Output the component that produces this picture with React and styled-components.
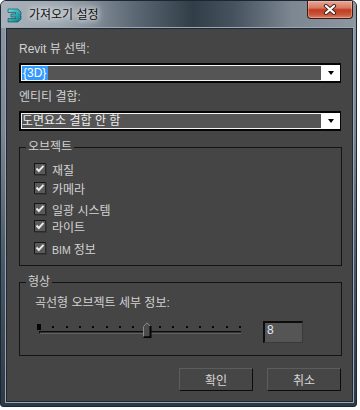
import React from 'react'
import styled, { createGlobalStyle } from 'styled-components'

const GlobalStyle = createGlobalStyle`
  html, body {
    margin: 0;
    padding: 0;
    background: #ffffff;
  }
  body {
    font-family: "Liberation Sans", "Noto Sans CJK KR", sans-serif;
    font-size: 12px;
  }
`

const Window = styled.div`
  width: 357px;
  height: 407px;
  box-sizing: border-box;
  border: 1px solid #1c2733;
  border-radius: 6px 6px 3px 3px;
  background: linear-gradient(180deg, #8e99a4 0px, #7a8793 130px, #4a5967 260px, #2c3a48 100%);
  display: flex;
  flex-direction: column;
  overflow: hidden;
`

const TitleBar = styled.div`
  height: 27px;
  flex: none;
  display: flex;
  align-items: flex-start;
  padding: 0 3px 0 6px;
  background: linear-gradient(90deg, #a9b2ba 0%, #9aa4ad 18%, #5b6772 38%, #313d47 54%, #47535e 66%, #7c8792 82%, #8d97a0 100%);
`

const AppIcon = styled.svg`
  width: 15px;
  height: 15px;
  margin-top: 7px;
  flex: none;
`

const Title = styled.span`
  margin: 7px 0 0 7px;
  line-height: 14px;
  font-size: 12px;
  color: #111;
  text-shadow: 0 0 5px rgba(255, 255, 255, 0.95), 0 0 9px rgba(255, 255, 255, 0.8), 0 0 14px rgba(255, 255, 255, 0.6);
`

const CloseButton = styled.div`
  margin-left: auto;
  width: 46px;
  height: 18px;
  box-sizing: border-box;
  border: 1px solid #3e1a12;
  border-top: none;
  border-radius: 0 0 4px 4px;
  background: linear-gradient(180deg, #e9a796 0%, #d77a63 40%, #bf3d22 52%, #c9553a 80%, #d9826a 100%);
  box-shadow: inset 0 0 0 1px rgba(255, 220, 200, 0.35);
  display: flex;
  align-items: center;
  justify-content: center;
`

const Client = styled.div`
  flex: 1;
  margin: 0 3px 4px 5px;
  border: 1px solid #1d2936;
  box-shadow: 0 0 0 1px #9ba7b2;
  background: #454545;
  padding: 13px 10px 0 12px;
  display: flex;
  flex-direction: column;
  color: #d2d2d2;
`

const Label = styled.div`
  line-height: 14px;
  height: 14px;
  margin-top: ${p => p.$space || 0}px;
  margin-left: ${p => p.$indent || 0}px;
  white-space: nowrap;
`

const Select = styled.div`
  margin-top: 7px;
  margin-right: 1px;
  height: 20px;
  box-sizing: border-box;
  border: 2px solid #050505;
  border-right-width: 1px;
  display: flex;
`

const Field = styled.div`
  flex: 1;
  border: 1px solid #f4f4f4;
  border-right: none;
  background: #555555;
  line-height: 14px;
  color: #ececec;
  display: flex;
  white-space: nowrap;
`

const Highlight = styled.span`
  background: #3399ff;
  color: #ffffff;
  padding: 0 2px 0 1px;
`

const ArrowBox = styled.div`
  width: 18px;
  background: #ffffff;
  display: flex;
  align-items: center;
  justify-content: center;
  padding-left: 1px;
  &::after {
    content: '';
    border-left: 3.5px solid transparent;
    border-right: 3.5px solid transparent;
    border-top: 4px solid #000;
  }
`

const Group = styled.fieldset`
  margin: ${p => p.$space}px 0 0 0;
  padding: ${p => p.$pt}px 0 ${p => p.$pb}px 14px;
  border: 1px solid #141414;
  min-width: 0;
`

const Legend = styled.legend`
  padding: 0 2px;
  margin-left: -8px;
  line-height: 14px;
  color: #d2d2d2;
`

const CheckRow = styled.div`
  display: flex;
  align-items: center;
  gap: 6px;
  height: 14px;
  margin-top: ${p => p.$space}px;
  white-space: nowrap;
`

const Box = styled.span`
  width: 12px;
  height: 12px;
  box-sizing: border-box;
  border: 1px solid;
  border-color: #151515 #2a2a2a #2a2a2a #151515;
  background: #5a5a5a;
  box-shadow: 1px 1px 0 #383838;
  display: flex;
  align-items: center;
  justify-content: center;
  flex: none;
`

const Small = styled.span`
  font-size: 10.5px;
  margin-right: 3px;
`

const SliderRow = styled.div`
  margin-top: 11px;
  margin-left: 3px;
  height: 22px;
  display: flex;
  align-items: flex-start;
`

const Slider = styled.div`
  position: relative;
  width: 204px;
  height: 22px;
`

const Ticks = styled.div`
  margin-top: 3px;
  height: 6px;
  display: flex;
  align-items: center;
  justify-content: space-between;
`

const Tick = styled.span`
  width: ${p => (p.$first ? 4 : 2)}px;
  height: ${p => (p.$first ? 6 : 2)}px;
  background: #050505;
`

const Track = styled.div`
  margin: 1px 0 0 2px;
  height: 1px;
  border-top: 1px solid #0c0c0c;
  border-left: 1px solid #0c0c0c;
  border-bottom: 1px solid #626262;
  background: #333;
`

const Thumb = styled.svg`
  position: absolute;
  top: 1px;
  width: 9px;
  height: 16px;
`

const NumberBox = styled.div`
  margin-left: 22px;
  width: 40px;
  height: 22px;
  box-sizing: border-box;
  border: 1px solid #3a3a3a;
  border-top: 2px solid #0c0c0c;
  border-left: 2px solid #0c0c0c;
  background: #555555;
  color: #e4ecf4;
  line-height: 14px;
  padding-left: 2px;
`

const ButtonRow = styled.div`
  margin: 12px 1px 0 0;
  display: flex;
  justify-content: flex-end;
  gap: 14px;
`

const Button = styled.div`
  width: 74px;
  height: 23px;
  box-sizing: border-box;
  border: 1px solid;
  border-color: #5c5c5c #0c0c0c #0c0c0c #5c5c5c;
  background: #464646;
  color: #d6d6d6;
  display: flex;
  align-items: center;
  justify-content: center;
`

const objects = [
  { label: '재질', space: 0 },
  { label: '카메라', space: 5 },
  { label: '일광 시스템', space: 7 },
  { label: '라이트', space: 3 },
  { label: '정보', space: 8, prefix: 'BIM' },
]

function Check() {
  return (
    <svg width="10" height="10" viewBox="0 0 10 10">
      <polyline points="1.5,4.5 3.8,7 8.5,1.8" fill="none" stroke="#e8e8e8" strokeWidth="2" />
    </svg>
  )
}

export default function App() {
  const value = 8
  const max = 15
  const step = 201 / max
  return (
    <>
      <GlobalStyle />
      <Window>
        <TitleBar>
          <AppIcon viewBox="0 0 15 15">
            <defs>
              <linearGradient id="ic" x1="0" y1="0" x2="1" y2="1">
                <stop offset="0" stopColor="#5fe0e6" />
                <stop offset="1" stopColor="#0a7884" />
              </linearGradient>
            </defs>
            <path d="M1 1 H11 L14 4 V7 L13 7.5 L14 8 V11 L11 14 H1 V10.5 H8.5 V9 H4 V6 H8.5 V4.5 H1 Z" fill="url(#ic)" stroke="#0b4a52" strokeWidth="0.6" />
          </AppIcon>
          <Title>가져오기 설정</Title>
          <CloseButton>
            <svg width="14" height="11" viewBox="0 0 14 11">
              <path d="M3 2 L11 9 M11 2 L3 9" stroke="#4a2a22" strokeWidth="4.2" strokeLinecap="round" />
              <path d="M3 2 L11 9 M11 2 L3 9" stroke="#ffffff" strokeWidth="2.2" strokeLinecap="round" />
            </svg>
          </CloseButton>
        </TitleBar>
        <Client>
          <Label>Revit 뷰 선택:</Label>
          <Select>
            <Field>
              <Highlight>{'{3D}'}</Highlight>
            </Field>
            <ArrowBox />
          </Select>
          <Label $space={7}>엔티티 결합:</Label>
          <Select>
            <Field>도면요소 결합 안 함</Field>
            <ArrowBox />
          </Select>

          <Group $space={9} $pt={8} $pb={10}>
            <Legend>오브젝트</Legend>
            {objects.map(o => (
              <CheckRow key={o.label} $space={o.space}>
                <Box><Check /></Box>
                <span>
                  {o.prefix && <Small>{o.prefix}</Small>}
                  {o.label}
                </span>
              </CheckRow>
            ))}
          </Group>

          <Group $space={9} $pt={7} $pb={12}>
            <Legend>형상</Legend>
            <Label $indent={1}>곡선형 오브젝트 세부 정보:</Label>
            <SliderRow>
              <Slider>
                <Ticks>
                  {Array.from({ length: max + 1 }, (_, i) => (
                    <Tick key={i} $first={i === 0} />
                  ))}
                </Ticks>
                <Track />
                <Thumb viewBox="0 0 9 16" style={{ left: `${2 + value * step - 3}px` }}>
                  <path d="M0.5 15 V4.5 L4 0.8 L7.5 4.5 V15 Z" fill="#4c4c4c" />
                  <path d="M0.5 15 V4.5 L4 0.8 L7 4" fill="none" stroke="#8a8a8a" strokeWidth="1" />
                  <path d="M7.5 4 V15.2 H0.5" fill="none" stroke="#050505" strokeWidth="2" />
                </Thumb>
              </Slider>
              <NumberBox>8</NumberBox>
            </SliderRow>
          </Group>

          <ButtonRow>
            <Button>확인</Button>
            <Button>취소</Button>
          </ButtonRow>
        </Client>
      </Window>
    </>
  )
}
